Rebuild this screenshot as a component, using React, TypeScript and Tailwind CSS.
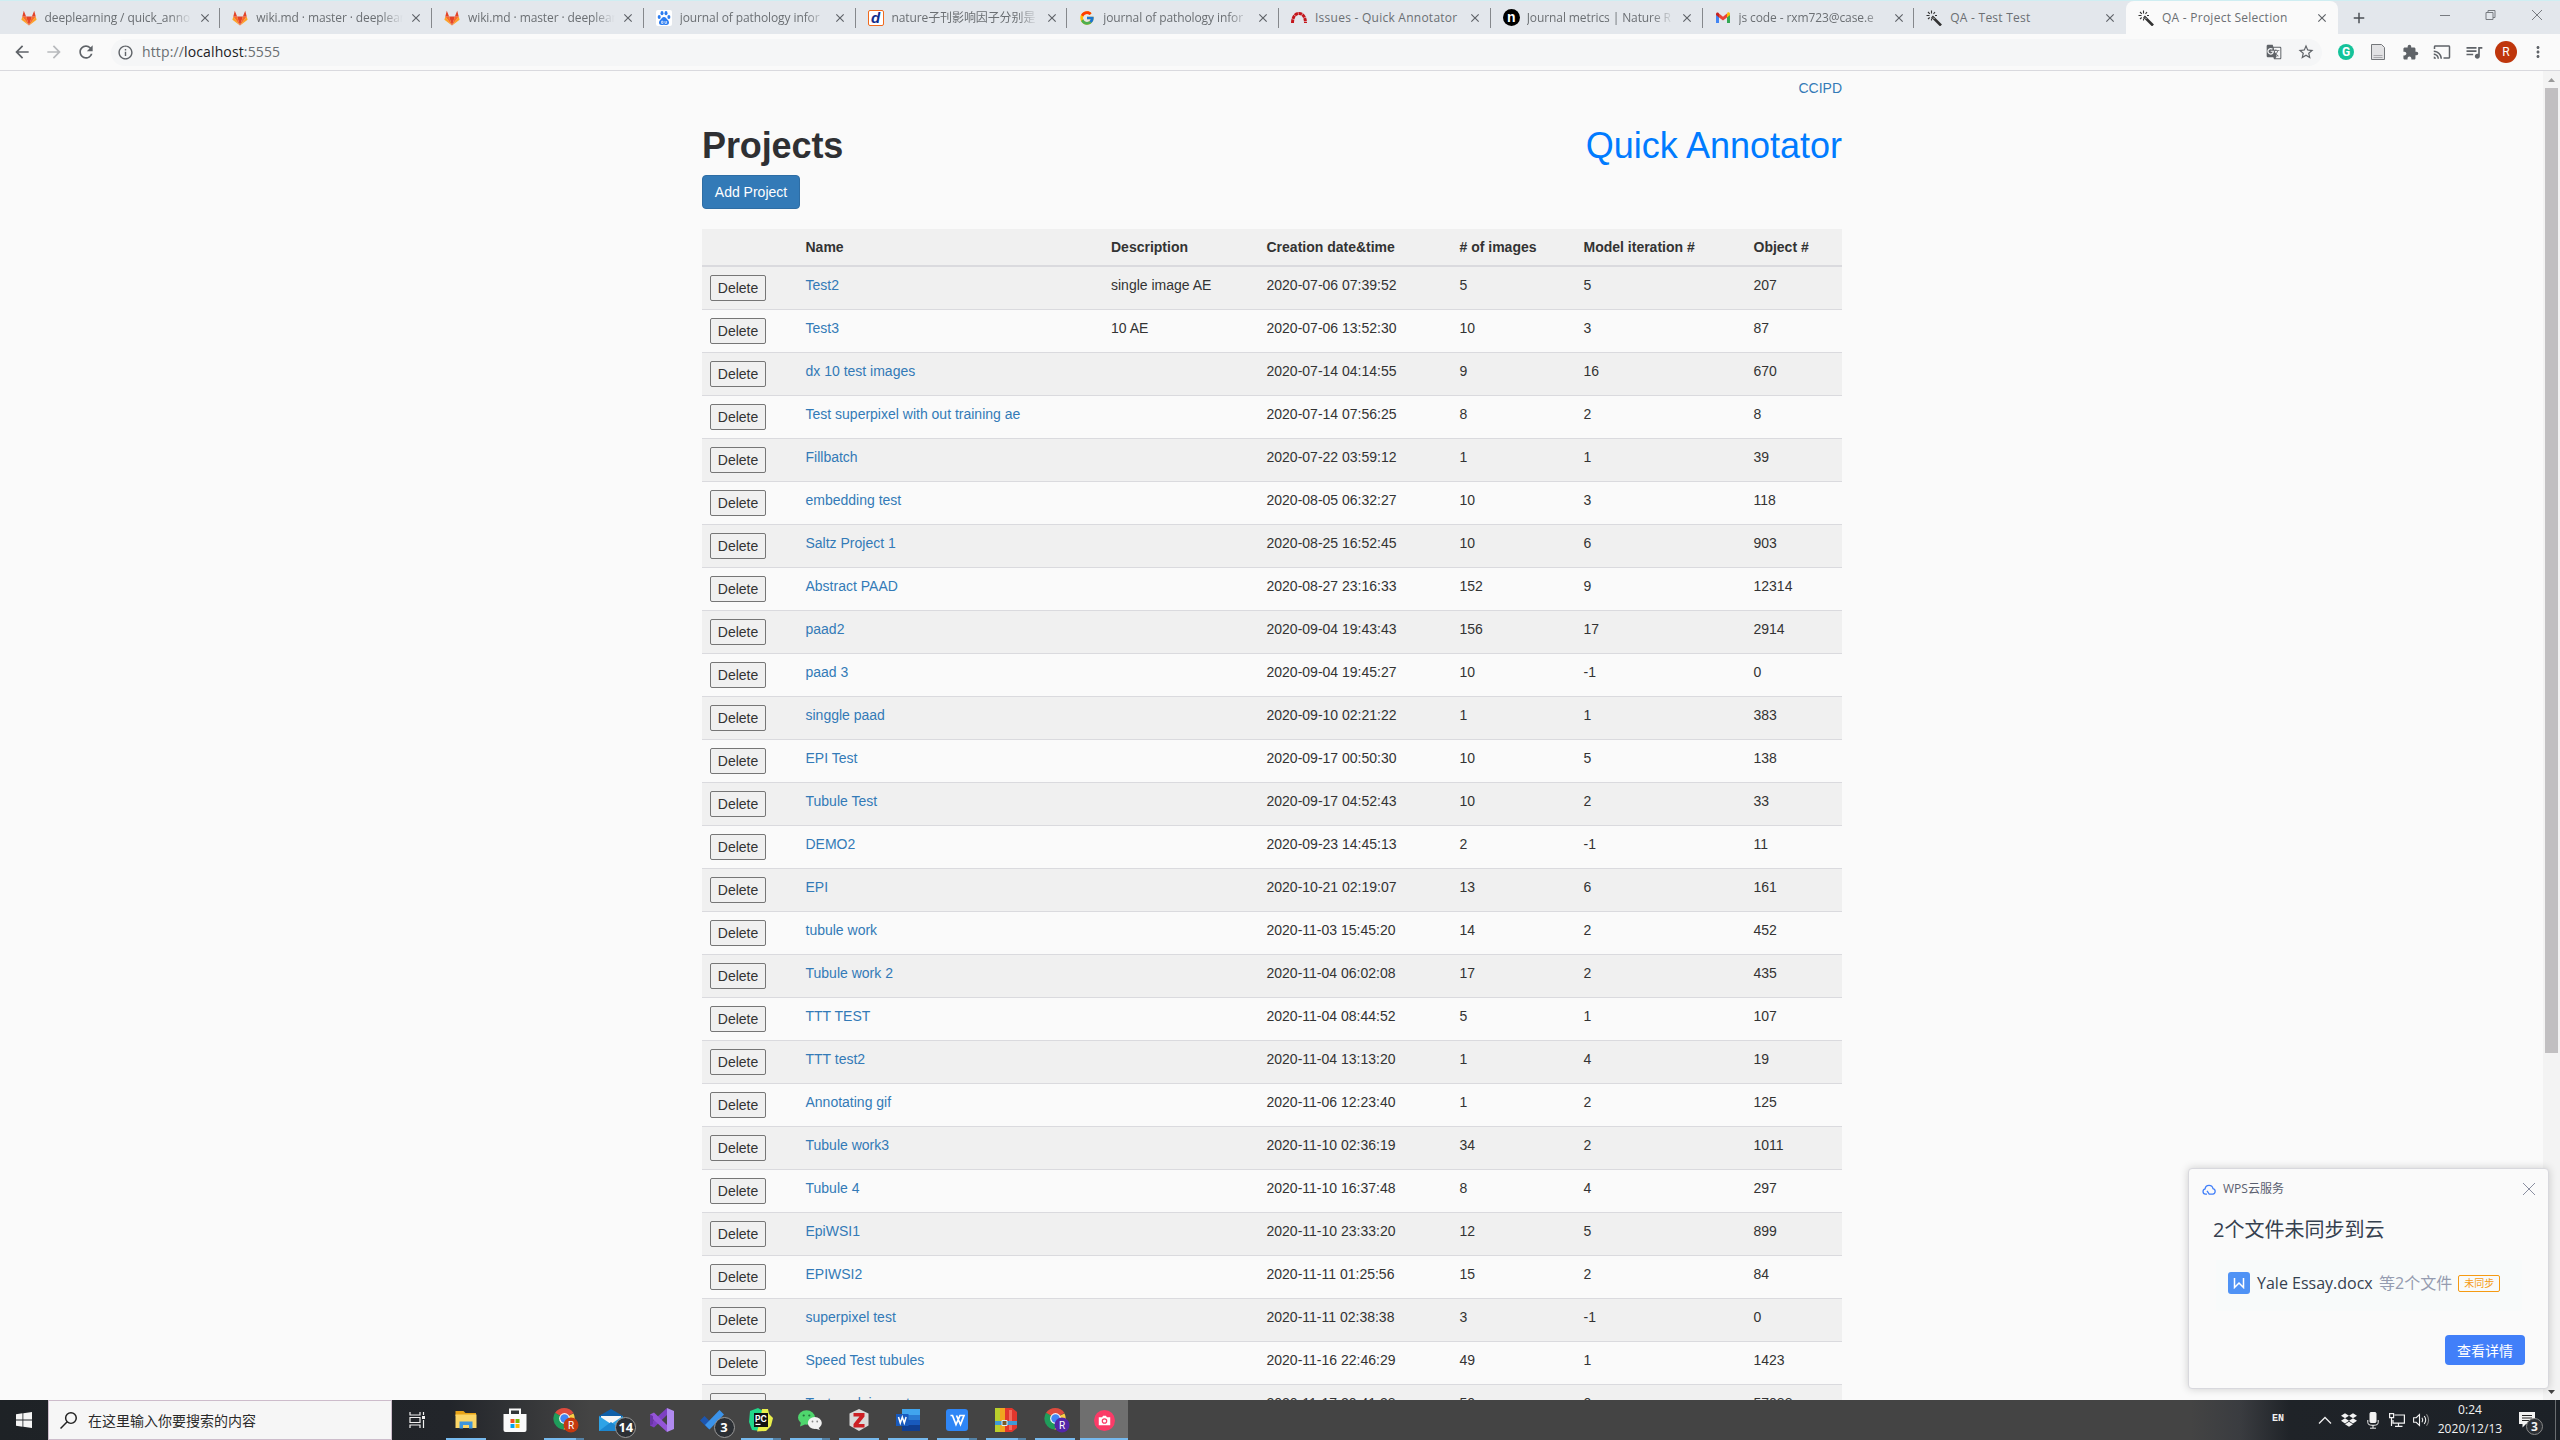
import React from "react";
import {
  MdArrowBack, MdArrowForward, MdRefresh, MdInfoOutline, MdGTranslate, MdStarBorder,
  MdExtension, MdCast, MdQueueMusic, MdMoreVert, MdClose, MdAdd,
} from "react-icons/md";
import { FcGoogle } from "react-icons/fc";
import { SiDropbox } from "react-icons/si";

const UI = "font-['Open_Sans','Noto_Sans_CJK_SC',sans-serif]";

/* ---------- favicons ---------- */

const GitlabIcon = () => (
  <svg viewBox="0 0 16 16" className="size-4">
    <path d="M8 15.5 15.6 9.8 14.7 6.6 8 15.5Z" fill="#fca326" />
    <path d="M8 15.5.4 9.8l.9-3.2L8 15.5Z" fill="#fca326" />
    <path d="M8 15.5 14.7 6.6h-3.8L8 15.5ZM8 15.5 1.3 6.6h3.8L8 15.5Z" fill="#fc6d26" />
    <path d="M8 15.5 10.9 6.6H5.1L8 15.5ZM14.7 6.6 13.2.8l-2.3 5.8ZM1.3 6.6 2.8.8l2.3 5.8Z" fill="#e24329" />
  </svg>
);

const BaiduIcon = () => (
  <svg viewBox="0 0 16 16" className="size-4" fill="#2b7cf0">
    <rect width="16" height="16" rx="2" fill="#fff" />
    <ellipse cx="3.2" cy="7" rx="1.5" ry="2" />
    <ellipse cx="6" cy="3.2" rx="1.5" ry="2.1" />
    <ellipse cx="10" cy="3.2" rx="1.5" ry="2.1" />
    <ellipse cx="12.9" cy="7" rx="1.5" ry="2" />
    <path d="M8 7c1.8 0 2.4 1.8 3.8 3 2.2 2 1.2 5-1.2 5-1 0-1.6-.3-2.6-.3s-1.600.3-2.600.3C3 15 2 12 4.200 10 5.600 8.800 6.200 7 8 7Z" />
    <path d="M5.600 11.200h1.400v2.200H5.600zM9 11v2.400h1.600V11" fill="none" stroke="#fff" strokeWidth=".7" />
  </svg>
);

const DocinIcon = () => (
  <span className="flex size-4 items-center justify-center rounded-[2px] border-[1.5px] border-[#f06a1d] bg-white font-['Liberation_Sans',sans-serif] text-[15px] leading-none font-bold text-[#0f2d8c] italic">
    d
  </span>
);

const RedmineIcon = () => (
  <svg viewBox="0 0 16 16" className="size-4">
    <path d="M1.500 13C1.500 8 3.500 3.500 8 3.500S14.500 8 14.500 13" fill="none" stroke="#c4161c" strokeWidth="3" strokeDasharray="3.600 .5" />
  </svg>
);

const NatureIcon = () => (
  <span className="flex size-[17px] items-center justify-center rounded-full bg-black pb-[2px] font-['Liberation_Sans',sans-serif] text-[14px] leading-none font-bold text-white">
    n
  </span>
);

const GmailIcon = () => (
  <svg viewBox="0 0 16 16" className="size-4">
    <path d="M1 4.500V13h3V7Z" fill="#4285f4" />
    <path d="M15 4.500V13h-3V7Z" fill="#34a853" />
    <path d="M12 3.800V7.400l3-2.300V4c0-1.600-1.700-2-2.600-1.300Z" fill="#fbbc04" />
    <path d="M4 7.400V3.600L8 6.700l4-3.100v3.800L8 10.500Z" fill="#ea4335" />
    <path d="M1 4v1.100l3 2.300V3.600l-.6-.9C2.400 2 1 2.500 1 4Z" fill="#c5221f" />
  </svg>
);

const WandIcon = () => (
  <svg viewBox="0 0 16 16" className="size-4" stroke="#333" fill="none">
    <path d="M6 6.500 15 15.500" strokeWidth="2.600" />
    <path d="M5.500.5v3M.5 5.500h3M2 2l1.800 1.800M9 2 7.500 3.800M2 9l1.700-1.500M5.500 8.500v2M9 5.500h2" strokeWidth="1.100" />
    <path d="M7 7.500l1.500 1.500" stroke="#ccc" strokeWidth="1" />
  </svg>
);

type Tab = { title: string; icon: React.ReactNode; sep?: boolean; active?: boolean; wide?: boolean };
const tabs: Tab[] = [
  { title: "deeplearning / quick_anno", icon: <GitlabIcon />, sep: true },
  { title: "wiki.md · master · deeplear", icon: <GitlabIcon />, sep: true },
  { title: "wiki.md · master · deeplear", icon: <GitlabIcon />, sep: true },
  { title: "journal of pathology infor", icon: <BaiduIcon />, sep: true },
  { title: "nature子刊影响因子分别是", icon: <DocinIcon />, sep: true },
  { title: "journal of pathology infor", icon: <FcGoogle className="size-4" />, sep: true },
  { title: "Issues - Quick Annotator", icon: <RedmineIcon />, sep: true, wide: true },
  { title: "Journal metrics | Nature R", icon: <NatureIcon />, sep: true },
  { title: "js code - rxm723@case.e", icon: <GmailIcon />, sep: true },
  { title: "QA - Test Test", icon: <WandIcon />, wide: true },
  { title: "QA - Project Selection", icon: <WandIcon />, active: true, wide: true },
];

const TabStrip = () => (
  <div className="flex h-[34px] shrink-0 border-t border-[#cfeef2] bg-[#e3e7ec] pl-[8.500px]">
    {tabs.map((t, i) => (
      <div
        key={i}
        className={
          t.active
            ? "flex h-[33px] w-[211.75px] items-center rounded-t-lg bg-[#fafafa] pl-[12px]"
            : "flex h-[33px] w-[211.75px] items-center pl-[12px]"
        }
      >
        <span className="flex w-6 shrink-0 items-center">{t.icon}</span>
        <span
          className={
            t.wide
              ? `${UI} w-[147px] shrink-0 text-[12px] tracking-[0.25px] whitespace-nowrap text-[#6b6f73]`
              : `${UI} w-[147px] shrink-0 overflow-hidden text-[12px] tracking-[-0.1px] whitespace-nowrap text-[#6b6f73] [mask-image:linear-gradient(to_right,#000_85%,transparent)]`
          }
        >
          {t.title}
        </span>
        <MdClose className="ml-[6px] size-[14px] shrink-0 text-[#5f6368]" />
        {t.sep && <span className="ml-auto h-5 w-px bg-[#85888c]" />}
      </div>
    ))}
    <div className="flex flex-1 items-center pl-[12px]">
      <MdAdd className="size-[18px] text-[#4c5054]" />
      <svg viewBox="0 0 104 12" className="mr-[17px] mb-[6px] ml-auto h-3 w-[104px]" fill="none" stroke="#777b80">
        <path d="M1 6.500h10M47 3.500h7v7h-7zM49 3.500v-2h7v7h-2M93 1l10 10M103 1 93 11" />
      </svg>
    </div>
  </div>
);

const Toolbar = () => (
  <div className="flex h-[37px] shrink-0 items-center border-b border-[#d9d9de] bg-[#fafafa] pl-[12px] text-[#5f6368]">
    <MdArrowBack className="size-5" />
    <MdArrowForward className="ml-3 size-5 text-[#b8babd]" />
    <MdRefresh className="ml-3 size-5" />
    <div className="ml-[15px] flex h-[27px] w-[2211px] items-center rounded-full bg-[#f5f6f7] pl-[6px]">
      <MdInfoOutline className="size-[17px]" />
      <span className={`${UI} ml-2 pb-px text-[14px] tracking-[0.13px] text-[#6a6e72]`}>
        http://<span className="text-[#202124]">localhost</span>:5555
      </span>
      <MdGTranslate className="mr-[15px] ml-auto size-4" />
      <MdStarBorder className="mr-[7px] size-[18px]" />
    </div>
    <div className="flex flex-1 items-center pl-2">
      <span className="flex w-8 shrink-0 justify-center">
        <span className="flex size-4 items-center justify-center rounded-full bg-[#15c39a] font-['Roboto',sans-serif] text-[12px] leading-none font-bold text-white">G</span>
      </span>
      <span className="flex w-8 shrink-0 justify-center">
        <svg viewBox="0 0 14 16" className="h-4 w-[14px]">
          <path d="M.5.500h10l3 3v12H.5z" fill="#e2e2e4" stroke="#74777a" />
          <path d="M2.500 11.500h9M2.500 13.500h9" stroke="#a9a9ad" />
        </svg>
      </span>
      <span className="flex w-8 shrink-0 justify-center"><MdExtension className="size-[17px]" /></span>
      <span className="flex w-8 shrink-0 justify-center"><MdCast className="size-[18px]" /></span>
      <span className="flex w-8 shrink-0 justify-center"><MdQueueMusic className="size-5" /></span>
      <span className="flex w-8 shrink-0 justify-center">
        <span className="flex size-[22px] items-center justify-center rounded-full bg-[#bf360c] font-['Roboto',sans-serif] text-[12px] text-white">R</span>
      </span>
      <span className="flex w-8 shrink-0 justify-center"><MdMoreVert className="size-[18px]" /></span>
    </div>
  </div>
);

/* ---------- project table ---------- */

const rows: [string, string, string, string, string, string][] = [
  ["Test2", "single image AE", "2020-07-06 07:39:52", "5", "5", "207"],
  ["Test3", "10 AE", "2020-07-06 13:52:30", "10", "3", "87"],
  ["dx 10 test images", "", "2020-07-14 04:14:55", "9", "16", "670"],
  ["Test superpixel with out training ae", "", "2020-07-14 07:56:25", "8", "2", "8"],
  ["Fillbatch", "", "2020-07-22 03:59:12", "1", "1", "39"],
  ["embedding test", "", "2020-08-05 06:32:27", "10", "3", "118"],
  ["Saltz Project 1", "", "2020-08-25 16:52:45", "10", "6", "903"],
  ["Abstract PAAD", "", "2020-08-27 23:16:33", "152", "9", "12314"],
  ["paad2", "", "2020-09-04 19:43:43", "156", "17", "2914"],
  ["paad 3", "", "2020-09-04 19:45:27", "10", "-1", "0"],
  ["singgle paad", "", "2020-09-10 02:21:22", "1", "1", "383"],
  ["EPI Test", "", "2020-09-17 00:50:30", "10", "5", "138"],
  ["Tubule Test", "", "2020-09-17 04:52:43", "10", "2", "33"],
  ["DEMO2", "", "2020-09-23 14:45:13", "2", "-1", "11"],
  ["EPI", "", "2020-10-21 02:19:07", "13", "6", "161"],
  ["tubule work", "", "2020-11-03 15:45:20", "14", "2", "452"],
  ["Tubule work 2", "", "2020-11-04 06:02:08", "17", "2", "435"],
  ["TTT TEST", "", "2020-11-04 08:44:52", "5", "1", "107"],
  ["TTT test2", "", "2020-11-04 13:13:20", "1", "4", "19"],
  ["Annotating gif", "", "2020-11-06 12:23:40", "1", "2", "125"],
  ["Tubule work3", "", "2020-11-10 02:36:19", "34", "2", "1011"],
  ["Tubule 4", "", "2020-11-10 16:37:48", "8", "4", "297"],
  ["EpiWSI1", "", "2020-11-10 23:33:20", "12", "5", "899"],
  ["EPIWSI2", "", "2020-11-11 01:25:56", "15", "2", "84"],
  ["superpixel test", "", "2020-11-11 02:38:38", "3", "-1", "0"],
  ["Speed Test tubules", "", "2020-11-16 22:46:29", "49", "1", "1423"],
  ["Test nuclei count", "", "2020-11-17 20:41:38", "50", "0", "57088"],
];

const COLS = "grid grid-cols-[95.5px_305.5px_155.5px_193px_124px_170px_96.5px]";

const Page = () => (
  <main className="h-full w-[1140px] font-['Liberation_Sans',Arial,sans-serif] text-[14px] leading-5 text-[#333]">
    <div className="flex justify-end pt-[7px]">
      <a className="text-[#337ab7]">CCIPD</a>
    </div>
    <div className="flex h-[77px] items-center justify-between text-[36px] leading-10">
      <h1 className="pt-[19px] font-bold tracking-[-0.1px] text-[#2f3033]">Projects</h1>
      <span className="pt-[19px] text-[#007bff]">Quick Annotator</span>
    </div>
    <button className="flex h-[34px] w-[98px] items-center justify-center rounded border border-[#2e6da4] bg-[#337ab7] text-white">
      Add Project
    </button>
    <div className="mt-5">
      <div className={`${COLS} h-[38px] items-center border-b-2 border-[#dadade] bg-[#f0f0f0] font-bold`}>
        {["", "Name", "Description", "Creation date&time", "# of images", "Model iteration #", "Object #"].map((h) => (
          <span key={h} className="pl-2">{h}</span>
        ))}
      </div>
      {rows.map((r, i) => (
        <div key={i} className={i % 2 ? `${COLS} h-[43px] border-b border-[#dadade] pt-2` : `${COLS} h-[43px] border-b border-[#dadade] bg-[#f0f0f0] pt-2`}>
          <span className="pl-2">
            <button className="flex h-[26px] w-[56px] items-center justify-center rounded-[2px] border border-[#767676] bg-[#f0f0f0]">
              Delete
            </button>
          </span>
          <a className="pl-2 text-[#337ab7]">{r[0]}</a>
          {r.slice(1).map((c, j) => (
            <span key={j} className="pl-2">{c}</span>
          ))}
        </div>
      ))}
    </div>
  </main>
);

const Scrollbar = () => (
  <div className="flex w-[17px] shrink-0 flex-col items-center bg-[#f3f3f3]">
    <svg viewBox="0 0 17 17" className="size-[17px] shrink-0"><path d="M5 11l3.500-4L12 11z" fill="#9a9a9a" /></svg>
    <div className="h-[965px] w-[13px] bg-[#c1bfc1]" />
    <svg viewBox="0 0 17 17" className="mt-auto size-[17px] shrink-0"><path d="M5 7l3.500 4L12 7z" fill="#444" /></svg>
  </div>
);

/* ---------- cloud sync toast ---------- */

const Toast = () => (
  <div className={`${UI} absolute top-[1168px] left-[2188px] flex h-[221px] w-[361px] flex-col rounded-[4px] border border-[#d8d8dd] bg-[#fafafa] shadow-[0_0_8px_rgba(0,0,0,0.18)]`}>
    <div className="mt-[10px] flex h-5 items-center pl-[13px]">
      <svg viewBox="0 0 14 11" className="h-[11px] w-[14px]" fill="none" stroke="#417ff9" strokeWidth="1.300">
        <path d="M5 10.200H3.400a2.700 2.700 0 0 1-.3-5.300A4 4 0 0 1 11 4.700a2.800 2.800 0 0 1-.3 5.500H7.200L5 6.800" />
      </svg>
      <span className="ml-[7px] text-[12px] text-[#5a6070]">WPS云服务</span>
      <svg viewBox="0 0 12 12" className="mr-[13px] ml-auto size-3" stroke="#8a8ea0"><path d="M0 0l12 12M12 0 0 12" /></svg>
    </div>
    <h2 className="mt-[16px] pl-[24px] text-[20px] leading-[30px] text-[#35404f]">2个文件未同步到云</h2>
    <div className="mt-[15px] ml-[27px] flex h-[51px] w-[306px] items-center bg-[#f8fafa] pb-[5px] pl-[12px]">
      <span className="flex size-[22px] shrink-0 items-center justify-center rounded-[3px] bg-[#4f92f5]">
        <svg viewBox="0 0 12 12" className="size-3" fill="none" stroke="#fff" strokeWidth="1.500"><path d="M1.500 1v9.500L6 6l4.500 4.500V1" /></svg>
      </span>
      <span className="ml-[7px] w-[117px] shrink-0 text-[16px] whitespace-nowrap text-[#35404f]">Yale Essay.docx</span>
      <span className="ml-[5px] shrink-0 text-[16px] whitespace-nowrap text-[#959cb0]">等2个文件</span>
      <span className="ml-[6px] flex h-[17px] w-[42px] shrink-0 items-center justify-center rounded-[2px] border border-[#f59a13] text-[10px] leading-none whitespace-nowrap text-[#f59a13]">未同步</span>
    </div>
    <button className="mt-[24px] mr-[23px] flex h-[30px] w-20 items-center justify-center self-end rounded-[4px] bg-[#417ff9] text-[14px] text-white">
      查看详情
    </button>
  </div>
);

/* ---------- taskbar ---------- */

const Chrome = ({ letter, color }: { letter: string; color: string }) => (
  <svg viewBox="0 0 26 26" className="ml-[3px] size-[26px]">
    <path d="M11 11 2 6a11 11 0 0 1 18.500 0Z" fill="#dd4b3e" />
    <path d="M11 11 2 5.800A11 11 0 0 0 10.500 22.500L15 14Z" fill="#1f9d5b" />
    <path d="M11 11 20.500 6.500A11 11 0 0 1 10.500 22.500L15 13Z" fill="#fccf45" />
    <circle cx="11.500" cy="11.500" r="5.400" fill="#f4f4f4" />
    <circle cx="11.500" cy="11.500" r="4.200" fill="#4285f4" />
    <circle cx="18" cy="18" r="7.500" fill={color} />
    <text x="18" y="21.500" textAnchor="middle" fontSize="10" fontFamily="Roboto" fill="#fff">{letter}</text>
  </svg>
);

const Count = ({ n }: { n: string }) => (
  <span className={`${UI} absolute top-[17px] left-[26px] flex size-[21px] items-center justify-center rounded-full border border-[#999] bg-[#2b2f34] text-[13px] leading-none font-bold text-white`}>
    {n}
  </span>
);

const apps: { icon: React.ReactNode; line?: boolean; split?: boolean; active?: boolean; badge?: string }[] = [
  {
    icon: (
      <svg viewBox="0 0 17 16" className="h-4 w-[17px]" fill="none" stroke="#f0f0f0" strokeWidth="1.200">
        <path d="M1 0v3h10V0M1 16v-3h10v3M1 5.500h10v5H1zM14.500 0v3M14.500 8v8" />
        <path d="M13 4h3v3h-3z" fill="#f0f0f0" stroke="none" />
      </svg>
    ),
  },
  {
    line: true,
    icon: (
      <svg viewBox="0 0 22 18" className="h-[18px] w-[22px]">
        <path d="M.5 0h8l2 2H21v3H.5z" fill="#e8a317" />
        <path d="M.5 3.500h21V17h-21z" fill="#fbd667" />
        <path d="M4.500 17.500V10.500h13v7h-3.500v-3.500h-6v3.500z" fill="#3d95dd" />
      </svg>
    ),
  },
  {
    icon: (
      <svg viewBox="0 0 24 24" className="size-6">
        <path d="M7 7V1.500h10V7" fill="none" stroke="#fafafa" strokeWidth="2" />
        <path d="M.5 6h23v16a2 2 0 0 1-2 2h-19a2 2 0 0 1-2-2z" fill="#fafafa" />
        <path d="M7.500 11h4v4h-4z" fill="#f25022" /><path d="M12.500 11h4v4h-4z" fill="#7fba00" />
        <path d="M7.500 16h4v4h-4z" fill="#00a4ef" /><path d="M12.500 16h4v4h-4z" fill="#ffb900" />
      </svg>
    ),
  },
  { line: true, split: true, icon: <Chrome letter="R" color="#c5390f" /> },
  {
    badge: "14",
    icon: (
      <svg viewBox="0 0 24 22" className="mr-1 h-[22px] w-6">
        <path d="M0 7 12 0l12 7v15H0z" fill="#0f5fa8" />
        <path d="M2 7h20v8H2z" fill="#f6f6f6" />
        <path d="M0 7l12 8L24 7v15H0z" fill="#2ea3e6" /><path d="M0 22 12 13l12 9z" fill="#1c87d0" />
      </svg>
    ),
  },
  {
    icon: (
      <svg viewBox="0 0 24 24" className="size-6">
        <path d="M17 0l7 3v18l-7 3z" fill="#b18af0" />
        <path d="M17 0v7L4 19.500 0 17.500v-2z" fill="#7d3fc2" />
        <path d="M17 24v-7L4 4.500 0 6.500v2z" fill="#9455d8" /><path d="M0 6.500 3 8v8l-3 1.500z" fill="#6a35a8" />
      </svg>
    ),
  },
  {
    badge: "3",
    icon: (
      <svg viewBox="0 0 24 20" className="h-5 w-6">
        <path d="M0 10.500 4.500 6 12.500 14 8.500 19Z" fill="#1d56b0" /><path d="M19.500 0 24 4.500 9.500 19.500 5 15Z" fill="#3b93ea" />
      </svg>
    ),
  },
  {
    line: true, split: true,
    icon: (
      <svg viewBox="0 0 24 24" className="size-6">
        <path d="M1 3 9 0l5 3-2 20-9-1-3-8z" fill="#21d789" />
        <path d="M13 1l6 0 1 5 4 4-2 8-5 5-9 .5 3-10z" fill="#e9ee4b" />
        <path d="M5 5h14v14H5z" fill="#111" />
        <text x="6" y="13.500" fontSize="8.500" fontWeight="bold" fontFamily="Inter" fill="#fff">PC</text>
        <path d="M6.500 15.800h5v1.200h-5z" fill="#fff" />
      </svg>
    ),
  },
  {
    line: true, split: true,
    icon: (
      <svg viewBox="0 0 24 20" className="h-5 w-6">
        <ellipse cx="8.500" cy="7.500" rx="8.500" ry="7.200" fill="#4fd66d" /><path d="M3 12l-1 4.500 5-2z" fill="#4fd66d" />
        <ellipse cx="16.800" cy="13" rx="7" ry="6" fill="#f2f2f2" /><path d="M20 17l2 3-5-1.500z" fill="#f2f2f2" />
        <g fill="#23733a"><circle cx="5.700" cy="5.500" r="1.100" /><circle cx="11.300" cy="5.500" r="1.100" /></g>
        <g fill="#888"><circle cx="14.500" cy="11.500" r=".9" /><circle cx="19.200" cy="11.500" r=".9" /></g>
      </svg>
    ),
  },
  {
    line: true,
    icon: (
      <svg viewBox="0 0 20 22" className="h-[22px] w-5">
        <path d="M10 0l9.500 4.500v12L10 22 .5 16.500v-12z" fill="#d9d9d9" />
        <path d="M4.500 4h11v3.500L9.500 15h6v3.500h-11V15l6-7.500h-6z" fill="#cc1f24" />
      </svg>
    ),
  },
  {
    line: true,
    icon: (
      <svg viewBox="0 0 24 22" className="h-[22px] w-6">
        <path d="M6 0h18v6H6z" fill="#41a5ee" /><path d="M6 6h18v5H6z" fill="#2b7cd3" /><path d="M6 11h18v5H6z" fill="#185abd" /><path d="M6 16h18v6H6z" fill="#103f91" />
        <path d="M0 5h12.500v12H0z" fill="#185abd" />
        <path d="M2.500 8l1.800 6 2-6 2 6 1.800-6" fill="none" stroke="#fff" strokeWidth="1.500" />
      </svg>
    ),
  },
  {
    line: true, split: true,
    icon: (
      <svg viewBox="0 0 22 22" className="size-[22px]">
        <rect width="22" height="22" rx="3" fill="#2f86f6" />
        <path d="M4.500 6.500h2l3.500 9 4-9H18l-3.500 9L10.500 6.500" fill="none" stroke="#fff" strokeWidth="1.700" />
      </svg>
    ),
  },
  {
    line: true, split: true,
    icon: (
      <svg viewBox="0 0 22 24" className="h-6 w-[22px]">
        <path d="M0 0h5v24H0z" fill="#b9cf2c" /><path d="M5 0h5v24H5z" fill="#f0a61f" />
        <path d="M10 0h7l5 4v16l-5 4h-7z" fill="#e2372d" /><path d="M14 2h3v20h-3z" fill="#f46a5b" />
        <path d="M0 13h22v4H0z" fill="#3f9ad6" /><path d="M7 12.500h5v5H7z" fill="#7a5a28" stroke="#d8ecf8" />
      </svg>
    ),
  },
  { line: true, icon: <Chrome letter="R" color="#5326a8" /> },
  {
    line: true, active: true,
    icon: (
      <svg viewBox="0 0 22 22" className="size-[21px]">
        <circle cx="11" cy="11" r="11" fill="#fb3b68" />
        <path d="M5 7.500h3.500l1-1.500h3l1 1.500H17v8.500H5z" fill="#fff" />
        <circle cx="11" cy="11.500" r="2.300" fill="#fff" stroke="#fb3b68" strokeWidth="1.300" />
      </svg>
    ),
  },
];

const Taskbar = () => (
  <div className="flex h-10 shrink-0 items-center bg-[linear-gradient(90deg,#1e2226_0px,#22252a_450px,#444_590px,#444_2190px,#3a3c40_2240px,#1f2328_2290px,#1c2127_2560px)] text-[#f2f2f2]">
    <div className="flex w-12 justify-center">
      <svg viewBox="0 0 16 16" className="size-4" fill="#f5f5f5">
        <path d="M0 2.200 6.500 1.300V7.600H0zM7.300 1.200 16 0v7.600H7.300zM0 8.400h6.500v6.300L0 13.800zM7.300 8.400H16V16l-8.700-1.200z" />
      </svg>
    </div>
    <div className="flex h-10 w-[344px] shrink-0 items-center border border-[#cdbccb] bg-[#f6f6f6] pl-[11px]">
      <svg viewBox="0 0 16 16" className="size-[17px]" fill="none" stroke="#222" strokeWidth="1.400">
        <circle cx="10.300" cy="5.700" r="5" /><path d="M6.800 9.200.5 15.500" />
      </svg>
      <span className={`${UI} ml-[11px] text-[14px] text-[#2a2a2a]`}>在这里输入你要搜索的内容</span>
    </div>
    <div className="flex gap-[1.1px] pl-px">
      {apps.map((a, i) => (
        <div key={i} className={a.active ? "relative flex h-10 w-12 flex-col bg-[#6f6f6f]" : "relative flex h-10 w-12 flex-col"}>
          <div className="flex flex-1 items-center justify-center pt-[2px]">{a.icon}</div>
          {a.badge && <Count n={a.badge} />}
          <div className="flex h-[2px] justify-center">
            {a.line && !a.active && <span className={a.split ? "h-[2px] w-8 bg-[#76b9ed]" : "h-[2px] w-10 bg-[#76b9ed]"} />}
            {a.split && <span className="h-[2px] w-2 bg-[#5482a6]" />}
            {a.active && <span className="h-[2px] w-12 bg-[#76b9ed]" />}
          </div>
        </div>
      ))}
    </div>
    <div className="ml-auto flex h-10 items-center">
      <span className="mr-[34px] pb-[3px] font-['Liberation_Mono',monospace] text-[10px] font-bold">EN</span>
      <svg viewBox="0 0 14 8" className="mr-[9px] h-2 w-[14px]" fill="none" stroke="#eee" strokeWidth="1.300"><path d="M1 7.500l6-6 6 6" /></svg>
      <SiDropbox className="size-4" />
      <svg viewBox="0 0 12 17" className="ml-[10px] h-[17px] w-3" fill="none" stroke="#f2f2f2">
        <rect x="3" y=".5" width="6" height="10" rx="1" fill="#f2f2f2" /><path d="M.8 8v2.500c0 2 1.500 2.800 5.200 2.800s5.200-.8 5.200-2.800V8M6 13v3M3 16.200h6" />
      </svg>
      <svg viewBox="0 0 16 14" className="ml-[10px] h-[14px] w-4" fill="none" stroke="#f2f2f2" strokeWidth="1.200">
        <path d="M5.500 2H15.400v8.200H4V7M9.500 10.500v3M6 13.400h7.500M.6.600h4v4h-4zM2.500 5v8" />
      </svg>
      <svg viewBox="0 0 17 14" className="ml-[8px] h-[14px] w-[17px]" fill="none" stroke="#f2f2f2" strokeWidth="1.100">
        <path d="M.6 4.700h2.600L6.500 1.500v11L3.200 9.300H.6zM9 4.800q1.500 2.200 0 4.400M11.200 3q3 4 0 8" /><path d="M13.500 1.200q4.200 5.800 0 11.600" stroke="#888" />
      </svg>
      <div className={`${UI} ml-[6px] flex h-10 w-[68px] flex-col items-center text-[12px] leading-[19px] tracking-[0.1px]`}>
        <span>0:24</span>
        <span>2020/12/13</span>
      </div>
      <div className="relative ml-[15px] h-10 w-[36px]">
        <svg viewBox="0 0 16 16" className="mt-3 size-4">
          <path d="M0 0h16v12H7l-3.500 3.500V12H0z" fill="#f2f2f2" /><path d="M3 3.500h10M3 6h10M3 8.500h7" stroke="#222" />
        </svg>
        <span className={`${UI} absolute top-[18px] left-[7px] flex size-[17px] items-center justify-center rounded-full border border-[#888] bg-[#2b2f34] text-[12px] leading-none font-bold`}>3</span>
      </div>
      <span className="mr-1 h-10 w-px bg-[#6a6d70]" />
    </div>
  </div>
);

export default function App() {
  return (
    <div className="relative flex h-[1440px] w-[2560px] flex-col overflow-hidden bg-[#fafafa]">
      <TabStrip />
      <Toolbar />
      <div className="flex h-[1329px] shrink-0 overflow-hidden">
        <div className="flex flex-1 overflow-hidden pl-[702px]">
          <Page />
        </div>
        <Scrollbar />
      </div>
      <Taskbar />
      <Toast />
    </div>
  );
}
